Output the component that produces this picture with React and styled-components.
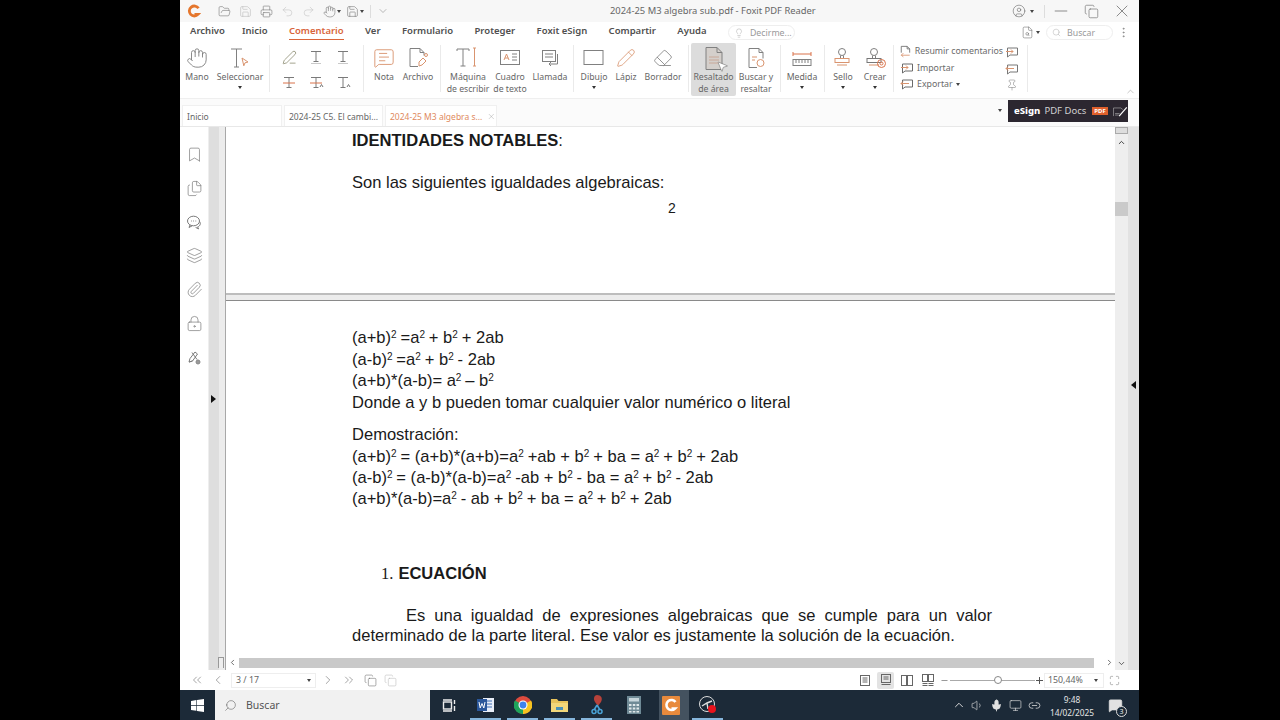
import React from "react";
import styled, { createGlobalStyle } from "styled-components";
import {
  Hand, FolderOpen, Save, Printer, Undo2, Redo2, Bookmark, Files, Layers, Paperclip,
  LockKeyhole, X, Minus, Copy, ChevronsLeft, ChevronsRight, ChevronLeft, ChevronRight, ChevronDown, ChevronUp,
  Search, Lightbulb, CircleUser, MessageSquareText, Pencil, Eraser, FileSearch,
  PenLine, Pin, Maximize, Volume1, Mic, Monitor, Link2, MessageSquare, MoreVertical, MousePointer2
} from "lucide-react";

const Global = createGlobalStyle`
  html, body { margin: 0; padding: 0; background: #000; }
  * { box-sizing: border-box; }
  #root { width: 1280px; height: 720px; overflow: hidden; }
`;

const UI = `"Noto Sans", "Open Sans", sans-serif`;
const DOC_SIZE = "16.55px";

const Stage = styled.div`
  width: 1280px; height: 720px; background: #000; padding-left: 180px; font-family: ${UI};
`;
const Win = styled.div`
  width: 959px; height: 720px; background: #fff; display: flex; flex-direction: column; position: relative;
`;
const TitleBar = styled.div`
  height: 22px; background: #f7f7f7; display: flex; align-items: center; color: #777; position: relative;
`;
const Logo = styled.svg`
  width: 14px; height: 14px; margin: 0 17px 0 7px; flex: none;
`;
const QuickGroup = styled.div`
  display: flex; align-items: center; gap: 8px;
  svg { flex: none; }
`;
const VSep = styled.span`
  width: 1px; height: 13px; background: #ddd; margin: 0 ${p => p.$m ?? 6}px; flex: none;
`;
const TitleText = styled.div`
  position: absolute; left: 430px; top: 3px; font-size: 9.4px; line-height: 15px; color: #666; white-space: nowrap;
`;
const WinControls = styled.div`
  margin-left: auto; display: flex; align-items: center; color: #666; padding-right: 7px;
`;
const Spacer = styled.span`
  width: ${p => p.$w}px; flex: none;
`;
const Caret = styled.span`
  display: inline-block; width: 0; height: 0; flex: none;
  border-left: 2.5px solid transparent; border-right: 2.5px solid transparent; border-top: 3px solid #444;
`;
const MenuBar = styled.div`
  height: 21px; background: #fff; display: flex; align-items: center; padding-left: 10px; position: relative;
`;
const MenuItem = styled.div`
  font-size: 9.5px; font-weight: 600; color: ${p => (p.$active ? "#d9653b" : "#505050")}; margin-right: ${p => p.$mr ?? 21.4}px;
  line-height: 15px; white-space: nowrap; padding-bottom: 1px; position: relative; top: -1px;
  border-bottom: 1px solid ${p => (p.$active ? "#d9653b" : "transparent")};
`;
const Pill = styled.div`
  height: 15px; border: 1px solid #eee; border-radius: 8px; display: flex; align-items: center; gap: 6px;
  width: ${p => p.$w}px; padding-left: 5px; color: #999; font-size: 8.8px; flex: none;
`;
const MenuRight = styled.div`
  margin-left: auto; display: flex; align-items: center; color: #666; padding-right: 9px;
`;
const Ribbon = styled.div`
  height: 55px; background: #fff; display: flex; align-items: stretch; position: relative;
`;
const RibbonBtn = styled.div`
  width: ${p => p.$w}px; flex: none; display: flex; flex-direction: column; align-items: center;
  background: ${p => (p.$active ? "#dcdcdc" : "transparent")}; padding-top: 2px; color: #808080;
  border-radius: 2px; position: relative; margin-bottom: 2px;
`;
const IconSlot = styled.div`
  height: 25px; margin-bottom: 1px; display: flex; align-items: center; justify-content: center; flex: none;
`;
const BtnLabel = styled.div`
  font-size: 8.7px; line-height: 12px; color: #666; text-align: center; white-space: nowrap;
`;
const BtnCaret = styled(Caret)`
  margin-top: 3px; border-top-color: #333;
`;
const RibbonSep = styled.div`
  width: 1px; background: #eaeaea; flex: none; margin: 2px ${p => p.$r}px 6px ${p => p.$l}px;
`;
const AnnotGrid = styled.div`
  width: 80px; flex: none; display: grid; grid-template-columns: repeat(3, 1fr); grid-template-rows: 26px 26px;
  padding-top: 1px; align-items: center; justify-items: center; color: #7a7a7a;
`;
const SmallList = styled.div`
  width: 103px; flex: none; display: flex; flex-direction: column;
`;
const SmallRow = styled.div`
  height: 16.5px; display: flex; align-items: center; gap: 3px; font-size: 8.8px; color: #6a6a6a; white-space: nowrap;
`;
const SmallCol = styled.div`
  width: 18px; flex: none; display: flex; flex-direction: column; align-items: center; color: #777; gap: 3px; padding-top: 2px;
`;
const CollapseUp = styled.div`
  position: absolute; right: 3px; top: 43px; color: #999; display: flex;
`;
const TabStrip = styled.div`
  height: 29px; background: #fbfbfb; border-top: 1px solid #efefef; border-bottom: 1px solid #e8e8e8;
  display: flex; align-items: flex-end; padding-left: 2px; gap: 2px; position: relative;
`;
const Tab = styled.div`
  width: ${p => p.$w}px; height: 21px; background: #fff; border: 1px solid #f0f0f0; border-bottom: none;
  display: flex; align-items: center; padding-left: 4px; gap: 5px; font-size: 8.5px; white-space: nowrap; flex: none;
  color: ${p => (p.$active ? "#e08a5e" : "#666")};
`;
const TabTail = styled.div`
  margin-left: auto; align-self: stretch; display: flex; align-items: center; padding: 0 11px 4px 0; gap: 6px;
`;
const Banner = styled.div`
  width: 120px; height: 22px; background: #2c2730; display: flex; align-items: center; padding-left: 6px; gap: 4px;
  font-size: 9.5px; color: #d0d0d0; white-space: nowrap; overflow: hidden; position: relative;
  b { color: #fff; font-weight: 800; }
`;
const PdfBadge = styled.span`
  background: #e0602c; color: #fff; font-size: 6px; font-weight: 700; padding: 0 2px; line-height: 8px; margin-left: 2px;
`;
const Main = styled.div`
  flex: 1; min-height: 0; display: flex;
`;
const SideBar = styled.div`
  width: 29px; flex: none; background: #fff; display: flex; flex-direction: column; align-items: center;
  padding-top: 19px; gap: 16.8px; color: #7a7a7a; border-right: 1px solid #eee;
`;
const Gutter = styled.div`
  width: 17px; flex: none; position: relative; display: flex; align-items: center;
  background: linear-gradient(90deg, #dedede 0, #dedede 10px, #ececec 10px, #ececec 16px, #a8a8a8 16px);
`;
const ArrowRight = styled.span`
  width: 0; height: 0; border-top: 4px solid transparent; border-bottom: 4px solid transparent;
  border-left: 5px solid #111; margin-left: 2px;
`;
const GutterTick = styled.span`
  position: absolute; right: 2px; bottom: 2px; width: 6px; height: 11px; border: 1px solid #999; border-bottom: none; background: #eee;
`;
const Center = styled.div`
  width: 889px; flex: none; display: flex; flex-direction: column; min-height: 0;
`;
const Viewport = styled.div`
  flex: 1; min-height: 0; overflow: hidden; background: #ececec;
`;
const PageTop = styled.div`
  height: 168px; background: #fff; border-bottom: 2px solid #bdbdbd; padding: 3px 123px 0 126px;
  font-family: "Liberation Sans", Arial, sans-serif; color: #1a1a1a; font-size: ${DOC_SIZE}; line-height: 21.5px;
`;
const PageMain = styled.div`
  height: 400px; background: #fff; border-top: 1px solid #8a8a8a; margin-top: 5px; padding: 26px 123px 0 126px;
  font-family: "Liberation Sans", Arial, sans-serif; color: #1a1a1a; font-size: ${DOC_SIZE}; line-height: 21.5px;
`;
const Strong = styled.div`
  font-weight: 700; span { font-weight: 400; }
`;
const Line = styled.div`
  white-space: nowrap; margin-top: ${p => p.$mt || 0}px;
  sup { font-size: 10px; line-height: 0; vertical-align: 5px; margin-right: -0.7px; }
`;
const PageNum = styled.div`
  margin-top: 5px; padding-left: 316px; font-size: 14px;
`;
const SectionHead = styled.div`
  margin-top: 54px; padding-left: 29px; display: flex; align-items: baseline; gap: 5px; font-weight: 700;
  i { font-family: "Liberation Serif", serif; font-style: normal; font-weight: 400; }
`;
const Para = styled.p`
  margin: 21px 0 0; text-align: justify; text-indent: 54px; line-height: 20px;
`;
const HScroll = styled.div`
  height: 13px; flex: none; background: #fff; display: flex; align-items: center; color: #444; padding: 0 1px 2px 2px;
`;
const HThumb = styled.div`
  flex: 1; height: 10px; background: #c9c9c9; margin: 0 11px 0 2px;
`;
const VTrack = styled.div`
  width: 13px; flex: none; background: #eeeeee; display: flex; flex-direction: column; align-items: center; color: #333;
`;
const VGrip = styled.div`
  width: 13px; height: 7px; border: 1px solid #aaa; background: #ddd; flex: none; margin-bottom: 4px;
`;
const VThumb = styled.div`
  width: 13px; height: 14px; background: #cacaca; margin-top: 55px; flex: none;
`;
const VEnd = styled.div`
  margin-top: auto; padding-bottom: 2px; display: flex;
`;
const RightGutter = styled.div`
  width: 11px; flex: none; background: #e2e2e2; display: flex; align-items: center; justify-content: center; padding-bottom: 28px;
`;
const ArrowLeft = styled.span`
  width: 0; height: 0; border-top: 4px solid transparent; border-bottom: 4px solid transparent; border-right: 5px solid #111;
`;
const StatusBar = styled.div`
  height: 20px; flex: none; background: #fff; display: flex; align-items: center; color: #666; padding-left: 10px;
`;
const PageBox = styled.div`
  width: 85px; height: 15px; border: 1px solid #eee; display: flex; align-items: center; padding: 0 4px; font-size: 8.8px;
  color: #666; margin: 0 5px 0 6px; justify-content: space-between; flex: none;
`;
const NavIcon = styled.span`
  display: flex; flex: none; margin-right: ${p => p.$mr || 0}px; opacity: ${p => p.$dim ? 0.45 : 1};
`;
const StatusRight = styled.div`
  margin-left: auto; display: flex; align-items: center; padding-right: 19px;
`;
const ViewBtn = styled.span`
  width: 17px; height: 17px; display: flex; align-items: center; justify-content: center; margin-right: 4px;
  background: ${p => (p.$active ? "#e3e3e3" : "transparent")}; border-radius: 2px; flex: none;
`;
const Slider = styled.div`
  width: 85px; height: 1px; background: #aaa; margin: 0 0 0 1px; position: relative; flex: none;
  span { position: absolute; left: 44px; top: -3.5px; width: 8px; height: 8px; border-radius: 50%; background: #fff; border: 1px solid #888; }
`;
const ZoomBox = styled.div`
  width: 60px; height: 15px; border: 1px solid #eee; display: flex; align-items: center; justify-content: space-between;
  font-size: 8.8px; color: #666; padding: 0 5px 0 3px; margin: 0 5px 0 0; flex: none;
`;
const Taskbar = styled.div`
  height: 30px; flex: none; background: #1c2a38; display: flex; align-items: center; position: relative; color: #e5e5e5;
`;
const StartBtn = styled.div`
  width: 35px; height: 30px; display: flex; align-items: center; justify-content: center; flex: none;
`;
const TaskSearch = styled.div`
  width: 215px; height: 30px; background: #f1f1f1; display: flex; align-items: center; padding-left: 9px; gap: 9px;
  font-size: 10.5px; color: #555; flex: none;
`;
const TaskApp = styled.div`
  width: 37px; height: 30px; display: flex; align-items: center; justify-content: center; flex: none; position: relative;
  background: ${p => (p.$focus ? "linear-gradient(90deg, transparent 7px, #44525f 7px)" : "transparent")};
  &::after {
    content: ""; position: absolute; left: 3px; right: 3px; bottom: 0; height: 2px;
    background: ${p => (p.$on ? "#86b6dc" : "transparent")};
  }
`;
const Tray = styled.div`
  margin-left: auto; display: flex; align-items: center; padding-right: 14px; color: #e2e2e2;
`;
const TrayIcon = styled.span`
  width: 19px; display: flex; justify-content: center; flex: none;
`;
const Clock = styled.div`
  width: 64px; text-align: center; font-size: 8.3px; line-height: 13px; color: #e6e6e6; margin: 2px 2px 0 -5px; padding-left: 2px; flex: none;
`;
const Notif = styled.div`
  position: relative; display: flex; width: 20px; justify-content: center; flex: none;
`;
const NotifCount = styled.span`
  position: absolute; right: -2px; bottom: -4px; width: 11px; height: 11px; border-radius: 50%;
  background: #1c2a38; border: 1px solid #ddd; font-size: 7px; line-height: 9px; text-align: center; color: #eee;
`;
const Cursor = styled.div`
  position: absolute; left: 536px; top: 17px; color: #666; display: flex;
`;

/* ---------- hand drawn icons ---------- */
const G = ({ size = 22, children, stroke = "currentColor", vb = 22 }) => (
  <svg width={size} height={size} viewBox={`0 0 ${vb} ${vb}`} fill="none" stroke={stroke} strokeWidth="1">{children}</svg>
);
const TextT = ({ under, small, tint }) => (
  <G size={18} vb={18}>
    <path d="M4 3.5h10M9 3.5v10M6.5 13.5h5" />
    {under && <path d="M3 9h12" stroke={tint || "#d9734a"} />}
    {small && <path d="M13 13l1.5-2.5 1.5 2.5" stroke="#777" />}
    {tint && !under && <path d="M4 15.5h10" stroke={tint} />}
  </G>
);
const SelectIcon = () => (
  <G size={24} vb={24}>
    <path d="M3 3h11M8.5 3v18M6 21h5" />
    <path d="M14 12l6 4-3 .8-1.2 3z" stroke="#d9946f" />
  </G>
);
const Typewriter = () => (
  <G size={26} vb={26}>
    <path d="M2 4h12v2M8 4v17M5.5 21h5M2 4v2" /><path d="M18 3h3M18 21h3M19.5 3v18" stroke="#d9946f" />
  </G>
);
const TextBox = () => (
  <G size={24} vb={24}>
    <rect x="2.5" y="4.5" width="19" height="14" /><path d="M6 14l2.5-6 2.5 6M7 12h3" stroke="#d9946f" /><path d="M14 8h5M14 11h5M14 14h5" />
  </G>
);
const Callout = () => (
  <G size={22}>
    <rect x="3.5" y="3.5" width="13" height="11" /><path d="M6 7h8M6 10h8" /><path d="M18.5 7v10H10M12 15l-2 2 2 2" />
  </G>
);
const HighlightDoc = () => (
  <G size={26} vb={26}>
    <path d="M5 2.5h11l5 5v17H5z" fill="#d4cfcb" /><path d="M16 2.5v5h5" />
    <path d="M8 12h10M8 15h10M8 18h10" stroke="#c9a898" />
  </G>
);
const FindDoc = () => (
  <G size={24} vb={24}>
    <path d="M5 2.5h10l4 4v6M15 2.5v4h4M5 2.5v19h8" /><path d="M8 11h5M8 14h3" stroke="#d9946f" /><circle cx="16.5" cy="17" r="3.5" stroke="#d9946f" />
  </G>
);
const Measure = () => (
  <G size={24} vb={24}>
    <path d="M3 6v4M21 6v4M3 8h18" stroke="#d9734a" />
    <rect x="3" y="13.5" width="18" height="6" /><path d="M6 14v3M9 14v3M12 14v3M15 14v3M18 14v3" />
  </G>
);
const StampIcon = ({ badge }) => (
  <G size={24} vb={24}>
    <circle cx="11" cy="6" r="3.5" /><path d="M9.5 9.5v3h3v-3" />
    <rect x="4" y="12.5" width="14" height="4" stroke={badge ? "#777" : "#d9946f"} /><path d="M6 19h10" stroke="#d9946f" />
    {badge && <><circle cx="18.5" cy="17.5" r="4" stroke="#d9734a" /><circle cx="18.5" cy="17.5" r="1.5" stroke="#d9734a" /></>}
  </G>
);
const FileClip = () => (
  <G size={26} vb={26}>
    <path d="M5 3.5h10l4 4v3M15 3.5v4h4M5 3.5v18h8" /><path d="M14 17l4-4 3 3-4 4-3 1z" stroke="#d9946f" /><circle cx="21" cy="10" r="1.5" stroke="#d9946f" />
  </G>
);
const Rect = () => <G size={28} vb={28}><rect x="4" y="6.5" width="19" height="14" /></G>;
const Doc = ({ arrow }) => (
  <G size={14} vb={14}>
    <path d="M1.5 9V1.5h7l3 3V9M8.5 1.5v3h3" />
    {arrow && <path d="M1.5 12h10M4 9.5L1.5 12 4 14" stroke="#d9946f" />}
  </G>
);
const BubbleArrow = ({ out }) => (
  <G size={14} vb={14}>
    <path d="M2.5 3h10v7H5l-2.5 2z" />
    <path d={out ? "M9 6.5H1M3 4.5l-2 2 2 2" : "M1 6.5h7M6 4.5l2 2-2 2"} stroke="#d9946f" />
  </G>
);
const ChatBubbles = () => (
  <G size={17} vb={17}>
    <ellipse cx="7.5" cy="7" rx="6" ry="4.8" /><path d="M4 11l-1 2.5 3-1.6" />
    <path d="M5 7h.8M7.2 7H8M9.4 7h.8" /><path d="M13.6 7.5c1.4 2 .6 4.6-2 5.4l1 2-3-1.5" />
  </G>
);
const PenSign = () => (
  <G size={17} vb={17}>
    <path d="M3 13l1-3.5L9 3l2.5 2-5 7zM3 13l3.5-1" /><path d="M6 3.5l5 7" /><circle cx="12" cy="13" r="2" stroke="#888" fill="#999" />
  </G>
);
const TaskView = () => (
  <svg width="14" height="13" viewBox="0 0 14 13" fill="none" stroke="#eee" strokeWidth="1.4"><rect x="1.5" y="3" width="8" height="7" /><path d="M1 1h9M1 12h9M12.5 1v4M12.5 7v5" /></svg>
);
const BannerArt = () => (
  <svg width="32" height="22" viewBox="0 0 32 22" fill="none">
    <path d="M3 21V5h14l4 3" stroke="#ccc" /><path d="M6 16h9M6 19h7" stroke="#ccc" />
    <path d="M14 21 29 4" stroke="#fff" strokeWidth="2.4" />
  </svg>
);
const WinLogo = () => (
  <svg width="13" height="13" viewBox="0 0 13 13" fill="#fff"><path d="M0 1.9 5.4 1.1v4.9H0zM6 1 13 0v6H6zM0 6.7h5.4v5L0 11zM6 6.7h7V13l-7-1z" /></svg>
);
const Chrome = () => (
  <svg width="18" height="18" viewBox="0 0 18 18"><circle cx="9" cy="9" r="9" fill="#dd4b3e" /><path d="M9 9 1 4.5A9 9 0 0 0 9 18z" fill="#1fa45a" /><path d="M9 9 17 4.5A9 9 0 0 1 9 18z" fill="#f6c321" /><circle cx="9" cy="9" r="4.5" fill="#fff" /><circle cx="9" cy="9" r="3.4" fill="#3d82ee" /></svg>
);
const Word = () => (
  <svg width="17" height="16" viewBox="0 0 17 16"><rect x="6" y="1" width="11" height="14" fill="#e8eef8" /><path d="M9 4h6M9 7h6M9 10h6" stroke="#3d6cb5" /><rect y="2" width="10" height="12" fill="#2b579a" /><path d="M2 5l1.2 6L5 6.5 6.8 11 8 5" stroke="#fff" fill="none" /></svg>
);
const Folder = () => (
  <svg width="17" height="14" viewBox="0 0 17 14"><path d="M0 1h6l1.5 2H17v11H0z" fill="#e7c35b" /><rect y="5" width="17" height="9" fill="#f2d77a" /><rect x="5" y="9" width="7" height="3" fill="#4a92b8" /></svg>
);
const Snip = () => (
  <svg width="14" height="20" viewBox="0 0 14 20"><path d="M7 0c4 0 6 3 4 7L8 11 5 7C3 4 4 0 7 0z" fill="#b8423a" /><path d="M7 10l-3 5M7 10l3 5" stroke="#4aa3d8" strokeWidth="1.5" /><circle cx="4" cy="16.5" r="2" fill="none" stroke="#4aa3d8" strokeWidth="1.5" /><circle cx="10" cy="16.5" r="2" fill="none" stroke="#4aa3d8" strokeWidth="1.5" /></svg>
);
const Calc = () => (
  <svg width="14" height="18" viewBox="0 0 14 18"><rect width="14" height="18" fill="#6f8a96" /><rect x="2" y="2" width="10" height="3.5" fill="#c8d6dc" /><path d="M2 8h2.5v2H2zM5.8 8h2.5v2H5.8zM9.5 8H12v2H9.5zM2 11.5h2.5v2H2zM5.8 11.5h2.5v2H5.8zM9.5 11.5H12v2H9.5zM2 15h2.5v1.5H2zM5.8 15h2.5v1.5H5.8zM9.5 15H12v1.5H9.5z" fill="#dfe7ea" /></svg>
);
const FoxitApp = () => (
  <svg width="18" height="19" viewBox="0 0 18 19"><rect width="18" height="19" rx="1" fill="#e88a3c" /><path d="M13.5 6A5 5 0 1 0 13 12.5H9.5" fill="none" stroke="#fff" strokeWidth="2.6" /></svg>
);
const Obs = () => (
  <svg width="20" height="20" viewBox="0 0 20 20" fill="none"><circle cx="9" cy="9" r="7.5" stroke="#ddd" /><path d="M4 11l5-3 5-2M9 8l1 6" stroke="#ddd" strokeWidth="1.4" /><circle cx="14" cy="14" r="4" fill="#e8131c" /></svg>
);

const Btn = ({ w, icon, label, caret, active }) => (
  <RibbonBtn $w={w} $active={active}>
    <IconSlot>{icon}</IconSlot>
    {label.map(l => <BtnLabel key={l}>{l}</BtnLabel>)}
    {caret && <BtnCaret />}
  </RibbonBtn>
);

const S = { size: 13, strokeWidth: 1.1 };
const Nav = { size: 14, strokeWidth: 1 };
const Sb = { size: 17, strokeWidth: 1 };
const Big = { size: 22, strokeWidth: 1 };

const Sq = () => <sup>2</sup>;

export default function App() {
  return (
    <Stage>
      <Global />
      <Win>
        <TitleBar>
          <Logo viewBox="0 0 14 14"><path d="M11.5 4.2A5 5 0 1 0 11 10.4H7.5" fill="none" stroke="#e5762c" strokeWidth="2.8" /></Logo>
          <QuickGroup>
            <FolderOpen {...S} /><Save {...S} color="#bbb" /><Printer {...S} /><Undo2 {...S} color="#c4c4c4" /><Redo2 {...S} color="#c4c4c4" />
            <Hand {...S} /><Caret style={{ marginLeft: -7 }} /><Save {...S} style={{ marginLeft: -3 }} /><Caret style={{ marginLeft: -7 }} />
          </QuickGroup>
          <VSep $m={6} /><ChevronDown size={12} strokeWidth={1} />
          <TitleText>2024-25 M3 algebra sub.pdf - Foxit PDF Reader</TitleText>
          <WinControls>
            <CircleUser size={14} strokeWidth={1} /><Spacer $w={4} /><Caret /><Spacer $w={10} /><VSep $m={0} /><Spacer $w={6} />
            <Minus size={20} strokeWidth={0.9} /><Spacer $w={13} /><Copy size={15} strokeWidth={1} /><Spacer $w={13} /><X size={20} strokeWidth={0.9} />
          </WinControls>
        </TitleBar>
        <MenuBar>
          <MenuItem $mr={17}>Archivo</MenuItem>
          <MenuItem>Inicio</MenuItem>
          <MenuItem $active>Comentario</MenuItem>
          <MenuItem>Ver</MenuItem>
          <MenuItem>Formulario</MenuItem>
          <MenuItem>Proteger</MenuItem>
          <MenuItem>Foxit eSign</MenuItem>
          <MenuItem>Compartir</MenuItem>
          <MenuItem>Ayuda</MenuItem>
          <Pill $w={67}><Lightbulb size={10} strokeWidth={1} />Decirme...</Pill>
          <MenuRight>
            <FileSearch size={13} strokeWidth={1} /><Spacer $w={2} /><Caret /><Spacer $w={6} />
            <Pill $w={67}><Search size={9} strokeWidth={1} />Buscar</Pill>
            <Spacer $w={4} /><MoreVertical size={13} strokeWidth={1} />
          </MenuRight>
        </MenuBar>
        <Ribbon>
          <Btn w={34} icon={<Hand {...Big} />} label={["Mano"]} />
          <Btn w={52} icon={<SelectIcon />} label={["Seleccionar"]} caret />
          <RibbonSep $l={3} $r={6} />
          <AnnotGrid>
            <PenLine size={15} strokeWidth={1} color="#6b6b4a" /><TextT tint="#c9c9c9" /><TextT tint="#c9c9c9" />
            <TextT under /><TextT under small /><TextT small />
          </AnnotGrid>
          <RibbonSep $l={7} $r={3} />
          <Btn w={34} icon={<MessageSquareText size={22} strokeWidth={1} color="#d9946f" />} label={["Nota"]} />
          <Btn w={34} icon={<FileClip />} label={["Archivo"]} />
          <RibbonSep $l={5} $r={4} />
          <Btn w={46} icon={<Typewriter />} label={["Máquina", "de escribir"]} />
          <Btn w={38} icon={<TextBox />} label={["Cuadro", "de texto"]} />
          <Btn w={42} icon={<Callout />} label={["Llamada"]} />
          <RibbonSep $l={2} $r={1} />
          <Btn w={38} icon={<Rect />} label={["Dibujo"]} caret />
          <Btn w={26} icon={<Pencil size={20} strokeWidth={1} color="#d9946f" />} label={["Lápiz"]} />
          <Btn w={48} icon={<Eraser size={20} strokeWidth={1} />} label={["Borrador"]} />
          <RibbonSep $l={1} $r={2} />
          <Btn w={45} active icon={<HighlightDoc />} label={["Resaltado", "de área"]} />
          <Btn w={40} icon={<FindDoc />} label={["Buscar y", "resaltar"]} />
          <RibbonSep $l={4} $r={3} />
          <Btn w={36} icon={<Measure />} label={["Medida"]} caret />
          <RibbonSep $l={4} $r={3} />
          <Btn w={30} icon={<StampIcon />} label={["Sello"]} caret />
          <Btn w={34} icon={<StampIcon badge />} label={["Crear"]} caret />
          <RibbonSep $l={1} $r={6} />
          <SmallList>
            <SmallRow><Doc arrow />Resumir comentarios</SmallRow>
            <SmallRow><BubbleArrow />Importar</SmallRow>
            <SmallRow><BubbleArrow out />Exportar <Caret /></SmallRow>
          </SmallList>
          <SmallCol>
            <BubbleArrow />
            <BubbleArrow out />
            <Pin size={12} strokeWidth={1} />
          </SmallCol>
          <RibbonSep $l={6} $r={0} />
          <CollapseUp><ChevronUp size={11} strokeWidth={1.2} /></CollapseUp>
          <Cursor><MousePointer2 size={13} strokeWidth={1} fill="#fff" /></Cursor>
        </Ribbon>
        <TabStrip>
          <Tab $w={100}>Inicio</Tab>
          <Tab $w={99}>2024-25 C5. El cambi...</Tab>
          <Tab $w={112} $active>2024-25 M3 algebra s...<X size={9} strokeWidth={1} color="#888" /></Tab>
          <TabTail>
            <Caret />
            <Banner><b>eSign</b> PDF Docs <PdfBadge>PDF</PdfBadge><BannerArt /></Banner>
          </TabTail>
        </TabStrip>
        <Main>
          <SideBar>
            <Bookmark {...Sb} /><Files {...Sb} /><ChatBubbles /><Layers {...Sb} /><Paperclip {...Sb} /><LockKeyhole {...Sb} /><PenSign />
          </SideBar>
          <Gutter><ArrowRight /><GutterTick /></Gutter>
          <Center>
            <Viewport>
              <PageTop>
                <Strong>IDENTIDADES NOTABLES<span>:</span></Strong>
                <Line $mt={20}>Son las siguientes igualdades algebraicas:</Line>
                <PageNum>2</PageNum>
              </PageTop>
              <PageMain>
                <Line>(a+b)<Sq /> =a<Sq /> + b<Sq /> + 2ab</Line>
                <Line>(a-b)<Sq /> =a<Sq /> + b<Sq /> - 2ab</Line>
                <Line>(a+b)*(a-b)= a<Sq /> – b<Sq /></Line>
                <Line>Donde a y b pueden tomar cualquier valor numérico o literal</Line>
                <Line $mt={11}>Demostración:</Line>
                <Line>(a+b)<Sq /> = (a+b)*(a+b)=a<Sq /> +ab + b<Sq /> + ba = a<Sq /> + b<Sq /> + 2ab</Line>
                <Line>(a-b)<Sq /> = (a-b)*(a-b)=a<Sq /> -ab + b<Sq /> - ba = a<Sq /> + b<Sq /> - 2ab</Line>
                <Line $mt={-1}>(a+b)*(a-b)=a<Sq /> - ab + b<Sq /> + ba = a<Sq /> + b<Sq /> + 2ab</Line>
                <SectionHead><i>1.</i> ECUACIÓN</SectionHead>
                <Para>Es una igualdad de expresiones algebraicas que se cumple para un valor determinado de la parte literal. Ese valor es justamente la solución de la ecuación.</Para>
              </PageMain>
            </Viewport>
            <HScroll>
              <ChevronLeft size={9} strokeWidth={2} />
              <HThumb />
              <ChevronRight size={9} strokeWidth={2} />
            </HScroll>
          </Center>
          <VTrack>
            <VGrip />
            <ChevronUp size={9} strokeWidth={2.4} />
            <VThumb />
            <VEnd><ChevronDown size={9} strokeWidth={2} /></VEnd>
          </VTrack>
          <RightGutter><ArrowLeft /></RightGutter>
        </Main>
        <StatusBar>
          <NavIcon $mr={7}><ChevronsLeft {...Nav} /></NavIcon>
          <NavIcon><ChevronLeft {...Nav} /></NavIcon>
          <PageBox>3 / 17<Caret /></PageBox>
          <NavIcon $mr={7}><ChevronRight {...Nav} /></NavIcon>
          <NavIcon $mr={8}><ChevronsRight {...Nav} /></NavIcon>
          <NavIcon $mr={7}><Copy size={13} strokeWidth={1} /></NavIcon>
          <NavIcon $dim><Copy size={13} strokeWidth={1} /></NavIcon>
          <StatusRight>
            <ViewBtn><G size={12} vb={12}><rect x="1.5" y="1.5" width="9" height="10" /><path d="M3.5 4h5M3.5 6h5M3.5 8h5" /></G></ViewBtn>
            <ViewBtn $active><G size={12} vb={12}><rect x="1.5" y="0.5" width="9" height="8" /><path d="M1.5 10.5h9M3.5 3h5M3.5 5h5" /></G></ViewBtn>
            <ViewBtn><G size={12} vb={12}><rect x="0.5" y="1.5" width="5" height="10" /><rect x="6.5" y="1.5" width="5" height="10" /></G></ViewBtn>
            <ViewBtn><G size={12} vb={12}><rect x="0.5" y="0.5" width="5" height="7" /><rect x="6.5" y="0.5" width="5" height="7" /><path d="M.5 9.5h5M6.5 9.5h5M.5 11.5h5M6.5 11.5h5" /></G></ViewBtn>
            <Minus size={9} strokeWidth={1.6} color="#555" />
            <Slider><span /></Slider>
            <G size={9} vb={9}><path d="M4.5 1v7M1 4.5h7" stroke="#555" /></G>
            <ZoomBox>150,44%<Caret /></ZoomBox>
            <Maximize size={11} strokeWidth={1} />
          </StatusRight>
        </StatusBar>
        <Taskbar>
          <StartBtn><WinLogo /></StartBtn>
          <TaskSearch><Search size={13} strokeWidth={1} style={{ transform: "scaleX(-1)" }} />Buscar</TaskSearch>
          <TaskApp><TaskView /></TaskApp>
          <TaskApp $on><Word /></TaskApp>
          <TaskApp $on><Chrome /></TaskApp>
          <TaskApp $on><Folder /></TaskApp>
          <TaskApp $on><Snip /></TaskApp>
          <TaskApp><Calc /></TaskApp>
          <TaskApp $focus><FoxitApp /></TaskApp>
          <TaskApp $on><Obs /></TaskApp>
          <Tray>
            <TrayIcon><ChevronUp size={14} strokeWidth={1.6} /></TrayIcon>
            <TrayIcon><Volume1 size={13} strokeWidth={1.2} /></TrayIcon>
            <TrayIcon><Mic size={13} strokeWidth={1.6} fill="#e2e2e2" /></TrayIcon>
            <TrayIcon><Monitor size={13} strokeWidth={1.2} /></TrayIcon>
            <TrayIcon><Link2 size={13} strokeWidth={1.4} /></TrayIcon>
            <Clock>9:48<br />14/02/2025</Clock>
            <Notif><MessageSquare size={15} strokeWidth={1.2} fill="#e2e2e2" /><NotifCount>3</NotifCount></Notif>
          </Tray>
        </Taskbar>
      </Win>
    </Stage>
  );
}
